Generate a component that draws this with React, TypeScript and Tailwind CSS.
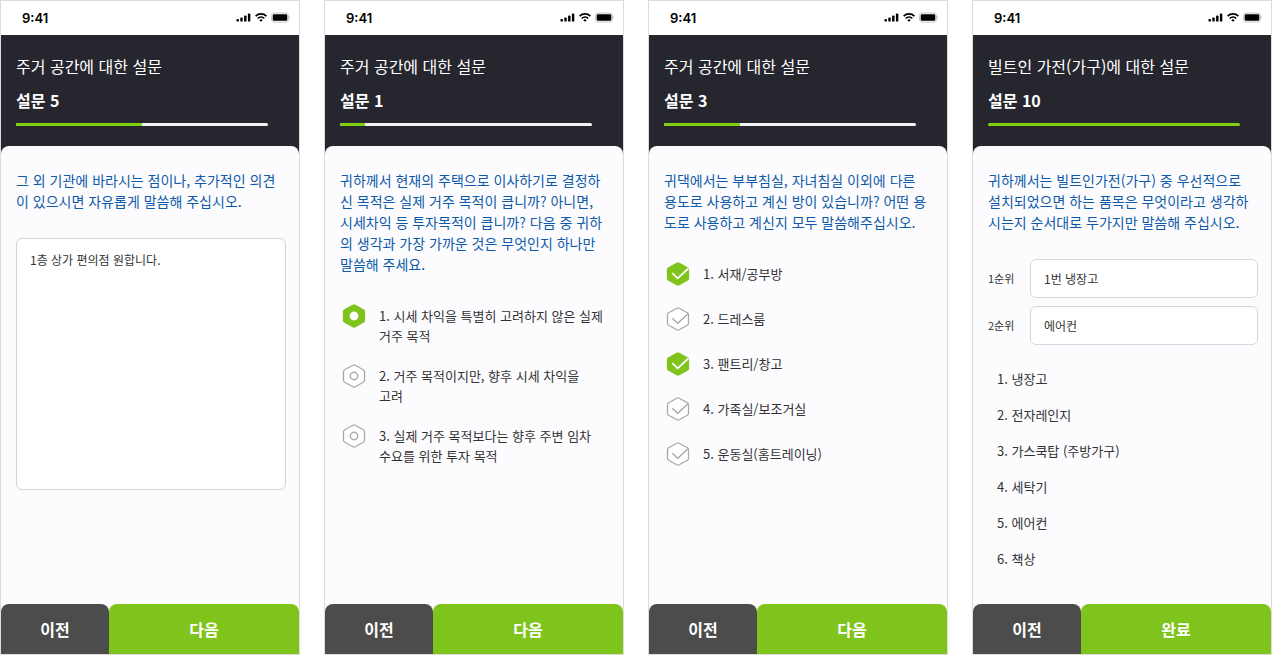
import React, { useState } from 'react';

const HEXAGON = 'M10.8 1.3a2.4 2.4 0 0 1 2.4 0l8.1 4.4a2.4 2.4 0 0 1 1.2 2.1v8.4a2.4 2.4 0 0 1-1.2 2.1l-8.1 4.4a2.4 2.4 0 0 1-2.4 0l-8.1-4.4a2.4 2.4 0 0 1-1.2-2.1V7.8a2.4 2.4 0 0 1 1.2-2.1z';

const StatusBar: React.FC = () => (
  <div className="flex h-[34px] items-center justify-between bg-white pl-[21px] pr-2 text-black">
    <span className="font-['Inter',sans-serif] text-[13px] leading-5 font-semibold">9:41</span>
    <div className="flex items-center gap-1">
      <svg className="h-3 w-[15px]" viewBox="0 0 15 12" fill="currentColor" aria-hidden="true">
        <rect x="0.5" y="7" width="2.4" height="2.6" rx="0.7" />
        <rect x="4.3" y="5.4" width="2.4" height="4.2" rx="0.7" />
        <rect x="8.1" y="3.5" width="2.4" height="6.1" rx="0.7" />
        <rect x="11.9" y="1.6" width="2.4" height="8" rx="0.7" />
      </svg>
      <svg className="h-3 w-3" viewBox="0 0 12 12" fill="none" stroke="currentColor" strokeWidth="1.6" aria-hidden="true">
        <path d="M0.6 4.1a7.7 7.7 0 0 1 10.8 0" />
        <path d="M2.7 6.5a4.7 4.7 0 0 1 6.6 0" />
        <path d="M6 9.8 4.3 8.2a2.4 2.4 0 0 1 3.4 0z" fill="currentColor" stroke="none" />
      </svg>
      <svg className="h-3 w-5" viewBox="0 0 20 12" fill="none" aria-hidden="true">
        <rect x="0.5" y="1" width="17" height="9" rx="2.6" stroke="#c4c4c4" />
        <rect x="1.7" y="2.2" width="14.6" height="6.6" rx="1.4" fill="#000" />
        <path d="M18.6 4c1 .6 1 2.4 0 3z" fill="#c4c4c4" />
      </svg>
    </div>
  </div>
);

interface SurveyScreenProps {
  title: string;
  number: number;
  question: string;
  nextLabel?: string;
  children: React.ReactNode;
}

const TOTAL = 10;

const SurveyScreen: React.FC<SurveyScreenProps> = ({ title, number, question, nextLabel = '다음', children }) => (
  <section className="flex min-w-0 flex-col border border-[#dcdcdc] bg-[#26262f]">
    <StatusBar />
    <header className="flex flex-col gap-[10px] pt-[19px] pr-[31px] pb-5 pl-[15px] text-white">
      <p className="text-base leading-6">{title}</p>
      <h2 className="text-base leading-6 font-bold">설문 {number}</h2>
      <div className="mt-px h-[3px] overflow-hidden rounded-full bg-[#f4f2f4]">
        <div className="h-full bg-[#80d010]" style={{ width: `${(number / TOTAL) * 100}%` }} />
      </div>
    </header>
    <div className="flex grow flex-col rounded-t-lg bg-[#fcfcff]">
      <div className="grow pt-6 pr-[13px] pl-[15px]">
        <p className="text-sm leading-[21px] whitespace-pre-line text-[#0f5aa8]">{question}</p>
        {children}
      </div>
      <footer className="flex h-[50px] text-base font-bold text-white">
        <button type="button" className="w-[108px] rounded-t-lg bg-[#4c4c4c]">이전</button>
        <button type="button" className="grow rounded-t-lg bg-[#7fc41c]">{nextLabel}</button>
      </footer>
    </div>
  </section>
);

interface OptionProps {
  type: 'radio' | 'checkbox';
  name: string;
  label: string;
  checked: boolean;
  onChange: () => void;
}

const Option: React.FC<OptionProps> = ({ type, name, label, checked, onChange }) => {
  const mark = checked ? '#fff' : '#a9a9ab';
  return (
    <label className="flex cursor-pointer items-start gap-[13px] pl-[2px]">
      <span className="grid h-6 w-6 shrink-0">
        <input
          type={type}
          name={name}
          checked={checked}
          onChange={onChange}
          className="col-start-1 row-start-1 h-6 w-6 cursor-pointer appearance-none"
        />
        <svg className="pointer-events-none col-start-1 row-start-1 h-6 w-6" viewBox="0 0 24 24" fill="none" aria-hidden="true">
          <path d={HEXAGON} fill={checked ? '#7fc41c' : '#fff'} stroke={checked ? '#7fc41c' : '#a9a9ab'} strokeWidth="1.3" />
          {type === 'radio' ? (
            <circle cx="12" cy="12" r="3.7" fill={checked ? '#fff' : 'none'} stroke={mark} strokeWidth="1.4" />
          ) : (
            <path d="m6.3 11.2 5.4 5.1 10.6-9.8" stroke={mark} strokeWidth={checked ? 1.8 : 1.4} />
          )}
        </svg>
      </span>
      <span className="pt-[2px] text-[13px] leading-5 whitespace-pre-line text-[#333]">{label}</span>
    </label>
  );
};

const purposes = [
  '1. 시세 차익을 특별히 고려하지 않은 실제\n거주 목적',
  '2. 거주 목적이지만, 향후 시세 차익을\n고려',
  '3. 실제 거주 목적보다는 향후 주변 임차\n수요를 위한 투자 목적',
];

const rooms = ['1. 서재/공부방', '2. 드레스룸', '3. 팬트리/창고', '4. 가족실/보조거실', '5. 운동실(홈트레이닝)'];

const appliances = ['1. 냉장고', '2. 전자레인지', '3. 가스쿡탑 (주방가구)', '4. 세탁기', '5. 에어컨', '6. 책상'];

const ranks = [
  { id: 'rank1', label: '1순위', value: '1번 냉장고' },
  { id: 'rank2', label: '2순위', value: '에어컨' },
];

export default function App() {
  const [purpose, setPurpose] = useState(0);
  const [selectedRooms, setSelectedRooms] = useState([0, 2]);

  const toggleRoom = (index: number) => {
    setSelectedRooms((prev) => (prev.includes(index) ? prev.filter((i) => i !== index) : [...prev, index]));
  };

  return (
    <main lang="ko" className="grid min-h-screen grid-cols-4 gap-6 bg-white font-['Noto_Sans_CJK_KR',sans-serif]">
      <SurveyScreen
        title="주거 공간에 대한 설문"
        number={5}
        question={'그 외 기관에 바라시는 점이나, 추가적인 의견\n이 있으시면 자유롭게 말씀해 주십시오.'}
      >
        <textarea
          aria-label="추가 의견"
          defaultValue="1층 상가 편의점 원합니다."
          className="mt-[26px] block h-[252px] w-full resize-none rounded-md border border-[#d4d4d4] bg-white px-[13px] py-[11px] text-xs leading-5 text-[#333] outline-none"
        />
      </SurveyScreen>

      <SurveyScreen
        title="주거 공간에 대한 설문"
        number={1}
        question={'귀하께서 현재의 주택으로 이사하기로 결정하\n신 목적은 실제 거주 목적이 큽니까? 아니면,\n시세차익 등 투자목적이 큽니까? 다음 중 귀하\n의 생각과 가장 가까운 것은 무엇인지 하나만\n말씀해 주세요.'}
      >
        <div className="mt-[29px] flex flex-col gap-[18px]">
          {purposes.map((label, i) => (
            <Option key={label} type="radio" name="purpose" label={label} checked={purpose === i} onChange={() => setPurpose(i)} />
          ))}
        </div>
      </SurveyScreen>

      <SurveyScreen
        title="주거 공간에 대한 설문"
        number={3}
        question={'귀댁에서는 부부침실, 자녀침실 이외에 다른\n용도로 사용하고 계신 방이 있습니까? 어떤 용\n도로 사용하고 계신지 모두 말씀해주십시오.'}
      >
        <div className="mt-[29px] flex flex-col gap-[21px]">
          {rooms.map((label, i) => (
            <Option key={label} type="checkbox" name="rooms" label={label} checked={selectedRooms.includes(i)} onChange={() => toggleRoom(i)} />
          ))}
        </div>
      </SurveyScreen>

      <SurveyScreen
        title="빌트인 가전(가구)에 대한 설문"
        number={10}
        question={'귀하께서는 빌트인가전(가구) 중 우선적으로\n설치되었으면 하는 품목은 무엇이라고 생각하\n시는지 순서대로 두가지만 말씀해 주십시오.'}
        nextLabel="완료"
      >
        <div className="mt-[26px] flex flex-col gap-2">
          {ranks.map((rank) => (
            <div key={rank.id} className="flex items-center">
              <label htmlFor={rank.id} className="w-[42px] shrink-0 text-[11px] text-[#333]">{rank.label}</label>
              <input
                id={rank.id}
                type="text"
                defaultValue={rank.value}
                className="h-[39px] min-w-0 grow rounded-md border border-[#d4d7da] bg-white px-[13px] text-xs text-[#333] outline-none"
              />
            </div>
          ))}
        </div>
        <ul className="mt-4 pl-[9px] text-[13px] leading-9 text-[#333]">
          {appliances.map((item) => (
            <li key={item}>{item}</li>
          ))}
        </ul>
      </SurveyScreen>
    </main>
  );
}
